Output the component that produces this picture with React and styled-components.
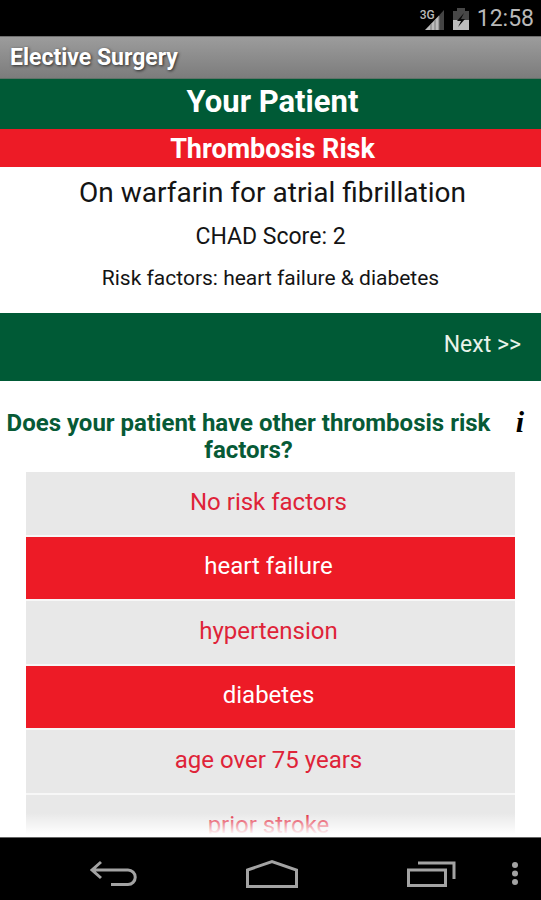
import React, { useState } from "react";
import styled, { createGlobalStyle } from "styled-components";

const GlobalStyle = createGlobalStyle`
  * { box-sizing: border-box; }
  body { margin: 0; background: #fff; font-family: Roboto, sans-serif; }
  button { font-family: inherit; border: 0; padding: 0; cursor: pointer; }
  h1, h2, h3, p { margin: 0; }
`;

const Screen = styled.div`
  display: flex;
  flex-direction: column;
  height: 100vh;
  overflow: hidden;
  background: #fff;
`;

const StatusBar = styled.header`
  flex: none;
  display: flex;
  align-items: center;
  justify-content: flex-end;
  gap: 8px;
  height: 36px;
  padding: 2px 7px 0 0;
  background: #000;
  color: #b9b9b9;
`;

const Signal = styled.div`
  display: flex;
`;

const Network = styled.span`
  height: 14px;
  margin-right: -10px;
  font-size: 12px;
  font-weight: 500;
  line-height: 12px;
`;

const Clock = styled.time`
  font-size: 23px;
  line-height: 32px;
`;

const TitleBar = styled.h1`
  flex: none;
  height: 43px;
  padding: 0 10px;
  border-top: 1px solid #6e6e6e;
  border-bottom: 1px solid #5f7268;
  background: linear-gradient(#9c9c9c, #7c7c7c);
  color: #fff;
  font-size: 23px;
  font-weight: 700;
  line-height: 41px;
  text-shadow: 1px 1px 3px rgba(0, 0, 0, 0.7);
`;

const Band = styled.h2`
  flex: none;
  padding: ${(p) => (p.$tone === "risk" ? "2px 0 0" : "0 0 4px")};
  background: ${(p) => (p.$tone === "risk" ? "#ed1b26" : "#005a36")};
  color: #fff;
  font-size: ${(p) => (p.$tone === "risk" ? 27 : 31)}px;
  font-weight: 700;
  line-height: ${(p) => (p.$tone === "risk" ? 36 : 46)}px;
  text-align: center;
  text-indent: 4px;
`;

const Summary = styled.section`
  flex: none;
  display: flex;
  flex-direction: column;
  gap: 8px;
  padding: 8px 0 20px;
  color: #141414;
  text-align: center;
`;

const Condition = styled.p`
  padding-left: 4px;
  font-size: 28px;
  line-height: 36px;
`;

const Score = styled.p`
  font-size: 23px;
  line-height: 36px;
`;

const Factors = styled.p`
  font-size: 21px;
  line-height: 30px;
`;

const ActionBar = styled.div`
  flex: none;
  display: flex;
  justify-content: flex-end;
  height: 68px;
  padding: 0 20px 6px;
  background: #005a36;
`;

const NextButton = styled.button`
  background: none;
  color: #e9f3ea;
  font-size: 23px;
`;

const Questionnaire = styled.main`
  position: relative;
  flex: 1;
  min-height: 0;
  padding-top: 29px;
  overflow: hidden;

  &::after {
    content: "";
    position: absolute;
    inset: auto 0 0;
    height: 24px;
    background: linear-gradient(rgba(255, 255, 255, 0), #fff 90%);
    pointer-events: none;
  }
`;

const QuestionRow = styled.div`
  display: flex;
  align-items: flex-start;
  gap: 12px;
  padding: 0 10px 8px 0;
`;

const Question = styled.h3`
  flex: 1;
  color: #075a36;
  font-size: 24px;
  font-weight: 700;
  line-height: 27px;
  text-align: center;
`;

const InfoButton = styled.button`
  width: 22px;
  background: none;
  color: #000;
  font-family: "Liberation Serif", serif;
  font-size: 30px;
  font-style: italic;
  font-weight: 700;
  line-height: 24px;
`;

const Options = styled.div`
  display: flex;
  flex-direction: column;
  gap: 2px;
  margin: 0 26px;
  background: #f7f7f7;
`;

const Option = styled.button`
  flex: none;
  height: ${(p) => (p["aria-pressed"] ? 62 : 63)}px;
  padding: 0 4px 4px 0;
  background: ${(p) => (p["aria-pressed"] ? "#ed1b26" : "#e8e8e8")};
  color: ${(p) => (p["aria-pressed"] ? "#fff" : "#df2338")};
  font-size: 24px;
`;

const NavBar = styled.nav`
  flex: none;
  display: grid;
  grid-template-columns: 33px 1fr 1fr 1fr 31px;
  height: 63px;
  padding-top: 10px;
  border-top: 1px solid #666;
  background: #000;
`;

const NavButton = styled.button`
  grid-column: ${(p) => p.$column};
  display: flex;
  align-items: center;
  justify-content: ${(p) => (p.$align === "start" ? "flex-start" : "center")};
  background: none;
  color: #a3a3a3;
`;

const Icon = styled.svg`
  display: block;
  fill: none;
  stroke: currentColor;
  stroke-width: 3;
`;

const SignalIcon = () => (
  <Icon width="20" height="21" viewBox="0 0 20 21" aria-hidden="true">
    <path d="M0 21 14 6.500V21z" fill="#bcbcbc" stroke="none" />
    <path d="M14 6.500 19 1V21H14z" fill="#444" stroke="none" />
    <path d="M6 15V21M10 11V21M14 7V21" stroke="#777" strokeWidth="1" />
  </Icon>
);

const BatteryIcon = () => (
  <Icon width="16" height="22" viewBox="0 0 16 22" aria-hidden="true">
    <path d="M0 3H4V0H12V3H16V12H0z" fill="#474747" stroke="none" />
    <path d="M0 12H16V22H0z" fill="#bcbcbc" stroke="none" />
    <path d="M11 5 4 13H8L5 19 12 11H8z" fill="#090909" stroke="none" />
  </Icon>
);

const BackIcon = () => (
  <Icon width="48" height="28" viewBox="0 0 48 28" aria-hidden="true">
    <path d="M12 2 3 10 12 18M3 10H39A7 7 0 0 1 39 24.500H22" />
  </Icon>
);

const HomeIcon = () => (
  <Icon width="54" height="30" viewBox="0 0 54 30" aria-hidden="true">
    <path d="M2.500 11 27 2.500 51.500 11V27.500H2.500z" />
  </Icon>
);

const RecentIcon = () => (
  <Icon width="50" height="28" viewBox="0 0 50 28" aria-hidden="true">
    <path d="M2.500 10H39.500V25.500H2.500zM12 3H48V19" />
  </Icon>
);

const MenuIcon = () => (
  <Icon width="10" height="26" viewBox="0 0 10 26" aria-hidden="true">
    <g fill="currentColor" stroke="none">
      <circle cx="5" cy="4" r="3" />
      <circle cx="5" cy="12.500" r="3" />
      <circle cx="5" cy="21" r="3" />
    </g>
  </Icon>
);

const RISK_FACTORS = [
  "No risk factors",
  "heart failure",
  "hypertension",
  "diabetes",
  "age over 75 years",
  "prior stroke",
];

export default function App() {
  const [selected, setSelected] = useState(["heart failure", "diabetes"]);
  const toggle = (name) =>
    setSelected((list) =>
      list.includes(name) ? list.filter((n) => n !== name) : [...list, name]
    );

  return (
    <>
      <GlobalStyle />
      <Screen>
        <StatusBar>
          <Signal>
            <Network>3G</Network>
            <SignalIcon />
          </Signal>
          <BatteryIcon />
          <Clock>12:58</Clock>
        </StatusBar>
        <TitleBar>Elective Surgery</TitleBar>
        <Band>Your Patient</Band>
        <Band $tone="risk">Thrombosis Risk</Band>
        <Summary>
          <Condition>On warfarin for atrial fibrillation</Condition>
          <Score>CHAD Score: 2</Score>
          <Factors>Risk factors: heart failure &amp; diabetes</Factors>
        </Summary>
        <ActionBar>
          <NextButton type="button">Next &gt;&gt;</NextButton>
        </ActionBar>
        <Questionnaire>
          <QuestionRow>
            <Question id="question">
              Does your patient have other thrombosis risk factors?
            </Question>
            <InfoButton type="button" aria-label="More information">i</InfoButton>
          </QuestionRow>
          <Options role="group" aria-labelledby="question">
            {RISK_FACTORS.map((name) => (
              <Option
                key={name}
                type="button"
                aria-pressed={selected.includes(name)}
                onClick={() => toggle(name)}
              >
                {name}
              </Option>
            ))}
          </Options>
        </Questionnaire>
        <NavBar>
          <NavButton $column={2} type="button" aria-label="Back"><BackIcon /></NavButton>
          <NavButton $column={3} type="button" aria-label="Home"><HomeIcon /></NavButton>
          <NavButton $column={4} type="button" aria-label="Recent apps"><RecentIcon /></NavButton>
          <NavButton $column={5} $align="start" type="button" aria-label="Menu"><MenuIcon /></NavButton>
        </NavBar>
      </Screen>
    </>
  );
}
